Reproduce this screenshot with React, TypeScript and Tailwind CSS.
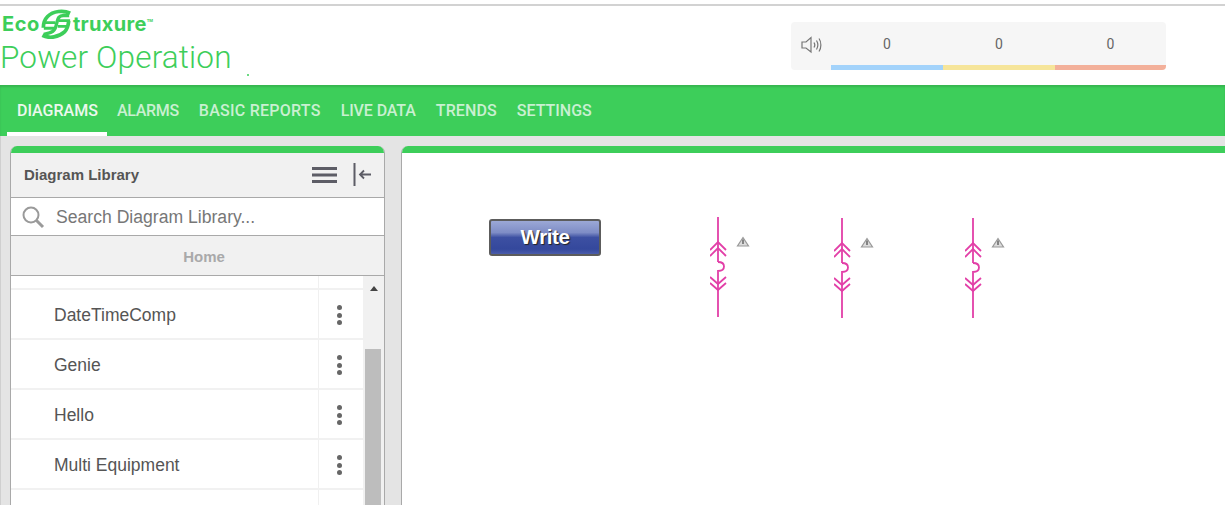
import React from "react";

const font = { fontFamily: '"Liberation Sans", Arial, sans-serif' };

function Logo() {
  return (
    <div className="flex items-center h-[30px] pl-[2px] text-[#3dce5a] font-['Inter',sans-serif] font-bold leading-none">
      <span className="text-[20px] w-[38px] tracking-[0.5px]">Eco</span>
      <svg width="31" height="30" viewBox="0 0 33 30" className="shrink-0 ml-[1px]">
        <g fill="none" stroke="#3dce5a">
          <path d="M31 3.5 C24 0 13 1 7 7 C4 10 2.5 14 2.5 19" strokeWidth="4" />
          <path d="M1.5 27 C9 31 19 29 25 23.5 C28 20.5 29 17 29.5 12" strokeWidth="4" />
          <path d="M30 6 H24 C19 6 18 9 17 13 C16 18 15 23 9 24.5 L3 26" strokeWidth="3.6" />
          <path d="M4 13.5 H15 M3 19.5 H14 M19 11.5 H31 M18 17.5 H28" strokeWidth="3" />
        </g>
      </svg>
      <span className="text-[20px] ml-[1px] tracking-[0.3px]">truxure</span>
      <span className="text-[4px] self-start mt-[10px]">TM</span>
    </div>
  );
}

function Symbol({ x, y }: { x: number; y: number }) {
  const c = "#e23fa7";
  return (
    <svg width="50" height="102" viewBox="0 0 50 102" className="absolute" style={{ left: x, top: y }}>
      <g fill="none" stroke={c} strokeWidth="1.8">
        <path d="M8 0 V45" />
        <path d="M0 33 L8 25 L16 33 M0 39 L8 31 L16 39" />
        <path d="M8 45 C12 45 14 47 14 49.5 C14 52 12 54 8 54 V67" />
        <path d="M0 60 L8 67 L16 60 M0 66 L8 73 L16 66" />
        <path d="M8 67 V100" />
      </g>
      <path d="M33 20.5 L38.5 29 H27.5 Z" fill="#dcdcdc" stroke="#999" strokeWidth="1.2" />
      <path d="M33 22.5 V27" stroke="#666" strokeWidth="1.5" />
    </svg>
  );
}

function Row({ label }: { label: string }) {
  return (
    <div className="flex h-[50px] border-b-2 border-[#f1f1f1] bg-white">
      <div className="flex-1 pl-[43px] flex items-center text-[17.5px] text-[#555] pt-[2px]">{label}</div>
      <div className="w-[45px] border-l border-[#f0f0f0] flex flex-col items-center justify-center gap-[2.5px] pr-[3px] pt-[2px]">
        <span className="w-[5px] h-[5px] rounded-full bg-[#666]" />
        <span className="w-[5px] h-[5px] rounded-full bg-[#666]" />
        <span className="w-[5px] h-[5px] rounded-full bg-[#666]" />
      </div>
    </div>
  );
}

export default function App() {
  const nav = [
    { label: "DIAGRAMS", cls: "pl-[10px] pr-[9px] tracking-[0px]" },
    { label: "ALARMS", cls: "px-[10px] tracking-[-0.3px]" },
    { label: "BASIC REPORTS", cls: "px-[10px] tracking-[0.25px]" },
    { label: "LIVE DATA", cls: "px-[10px] tracking-[-0.1px]" },
    { label: "TRENDS", cls: "px-[10px] tracking-[0.1px]" },
    { label: "SETTINGS", cls: "px-[10px] tracking-[0px]" },
  ];
  return (
    <div className="w-[1225px] h-[505px] overflow-hidden bg-[#e4e4e4] flex flex-col" style={font}>
      <header className="h-[85px] shrink-0 bg-white relative flex">
        <div className="w-full absolute top-[4px] left-0 h-[2px] bg-[#d2d2d2]" />
        <div className="w-[791px] pt-[9px]">
          <Logo />
          <div className="flex items-start pt-[1px]">
            <span className="text-[31.5px] leading-[36px] text-[#3dce5a] font-['Roboto',sans-serif] font-light tracking-[0.15px]">Power Operation</span>
            <span className="w-[2px] h-[2px] bg-[#3dce5a] ml-[15px] mt-[34px] rounded-full" />
          </div>
        </div>
        <div className="mt-[22px] w-[375px] h-[48px] bg-[#f6f6f6] rounded-[4px] flex overflow-hidden self-start">
          <div className="w-[40px] flex pt-[14px] pl-[10px]">
            <svg width="22" height="18" viewBox="0 0 22 18" fill="none" stroke="#777" strokeWidth="1.2">
              <path d="M1 6 H5 L10 1.5 V16 L5 12 H1 Z" />
              <path d="M13 6.5 C14 8 14 10 13 11.5 M15.5 4.5 C17 7 17 11 15.5 13.5 M18 2.5 C20.5 6 20.5 12 18 15.5" />
            </svg>
          </div>
          {[
            ["#a3d3fb", "w-[112px]"],
            ["#f6e59a", "w-[112px]"],
            ["#f3b09a", "w-[111px]"],
          ].map(([color, w], i) => (
            <div key={i} className={`${w} flex flex-col`}>
              <div className="flex-1 flex items-center justify-center text-[14px] text-[#666] font-['Roboto',sans-serif] pt-[2px]">0</div>
              <div className="h-[5px]" style={{ backgroundColor: color }} />
            </div>
          ))}
        </div>
      </header>

      <nav className="h-[51px] shrink-0 bg-[#3dce5a] flex pl-[7px] shadow-[inset_0_2px_2px_rgba(0,0,0,0.12)]">
        {nav.map((n, i) => (
          <div key={n.label} className={`flex items-center text-[16px] font-['Roboto',sans-serif] font-medium pt-[4px] border-b-[4px] ${n.cls} ${i === 0 ? "text-[#ecf8ee] border-white" : "text-[#c9f0d1] border-transparent"}`}>
            {n.label}
          </div>
        ))}
      </nav>

      <main className="flex-1 flex gap-[16px] pl-[10px] pt-[10px] min-h-0 border-l border-[#cfcfcf]">
        <section className="w-[375px] shrink-0 flex flex-col bg-white border-x border-[#a9a9a9] rounded-t-[7px] overflow-hidden -ml-[1px]">
          <div className="h-[7px] bg-[#3dce5a] shrink-0 -mx-[1px]" />
          <div className="h-[45px] shrink-0 bg-[#f1f1f1] border-b border-[#a9a9a9] flex items-center pl-[13px] pr-[12px]">
            <span className="text-[15px] font-bold text-[#555] flex-1 pt-[1px]">Diagram Library</span>
            <svg width="26" height="18" viewBox="0 0 26 18" className="mr-[15px]">
              <rect y="1" width="25" height="3" fill="#5d5d66" />
              <rect y="7.5" width="25" height="3" fill="#5d5d66" />
              <rect y="14" width="25" height="3" fill="#5d5d66" />
            </svg>
            <svg width="19" height="24" viewBox="0 0 19 24" fill="none" stroke="#5d5d66">
              <path d="M1.5 0 V23" strokeWidth="2" />
              <path d="M18 11.5 H7 M11 7.5 L7 11.5 L11 15.5" strokeWidth="1.8" />
            </svg>
          </div>
          <div className="h-[38px] shrink-0 bg-white border-b border-[#a9a9a9] flex items-center pl-[10px]">
            <svg width="24" height="24" viewBox="0 0 24 24" fill="none" stroke="#9a9a9a">
              <circle cx="10" cy="10" r="7.5" strokeWidth="2" />
              <path d="M15.5 15.5 L22 22" strokeWidth="3" />
            </svg>
            <span className="ml-[11px] text-[17.6px] text-[#777] pt-[2px]">Search Diagram Library...</span>
          </div>
          <div className="h-[40px] shrink-0 bg-[#f1f1f1] border-b border-[#a9a9a9] flex items-center justify-center text-[15px] font-bold text-[#a9a9aa] pl-[13px] pt-[4px]">
            Home
          </div>
          <div className="flex-1 min-h-0 flex">
            <div className="flex-1 overflow-hidden">
              <div className="h-[14px] border-b-2 border-[#f1f1f1] flex justify-end">
                <div className="w-[45px] border-l border-[#f0f0f0]" />
              </div>
              <Row label="DateTimeComp" />
              <Row label="Genie" />
              <Row label="Hello" />
              <Row label="Multi Equipment" />
              <Row label="" />
            </div>
            <div className="w-[21px] bg-[#f1f1f1] flex flex-col items-center shrink-0">
              <div className="w-0 h-0 mt-[10px] border-x-[4px] border-x-transparent border-b-[5px] border-b-[#444]" />
              <div className="mt-[58px] flex-1 w-[16px] bg-[#bdbdbd] mr-[2px]" />
            </div>
          </div>
        </section>

        <section className="flex-1 bg-white border-l border-[#a9a9a9] rounded-tl-[7px] overflow-hidden relative">
          <div className="h-[7px] bg-[#3dce5a] -ml-[1px]" />
          <button className="absolute left-[87px] top-[73px] w-[112px] h-[37px] rounded-[3px] border-2 border-[#5c5c5c] text-white font-bold text-[20.5px] bg-[linear-gradient(#9ba8d6_0%,#7f8dc6_35%,#3d50a2_50%,#34489c_85%,#4a5cab_100%)] [text-shadow:1px_1px_1px_#222] tracking-[-0.4px]">
            Write
          </button>
          <Symbol x={308} y={71} />
          <Symbol x={432} y={72} />
          <Symbol x={563} y={72} />
        </section>
      </main>
    </div>
  );
}
